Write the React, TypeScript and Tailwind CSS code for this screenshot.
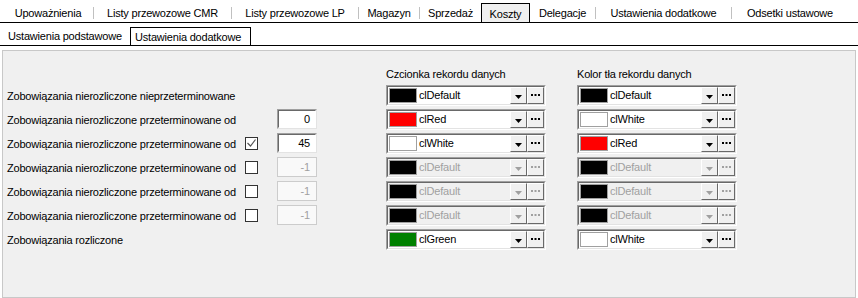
import React from "react";

type Tab = { label: string; w: number; active?: boolean; sep?: boolean };

const topTabs: Tab[] = [
  { label: "Upoważnienia", w: 91, sep: true },
  { label: "Listy przewozowe CMR", w: 138, sep: true },
  { label: "Listy przewozowe LP", w: 127, sep: true },
  { label: "Magazyn", w: 61, sep: true },
  { label: "Sprzedaż", w: 61 },
  { label: "Koszty", w: 49, active: true },
  { label: "Delegacje", w: 66, sep: true },
  { label: "Ustawienia dodatkowe", w: 136, sep: true },
  { label: "Odsetki ustawowe", w: 116 },
];

type Combo = { color: string; name: string; disabled?: boolean };
type Row = {
  label: string;
  check?: boolean;
  value?: string;
  valueDisabled?: boolean;
  a: Combo;
  b: Combo;
};

const dis: Combo = { color: "#000000", name: "clDefault", disabled: true };

const rows: Row[] = [
  {
    label: "Zobowiązania nierozliczone nieprzeterminowane",
    a: { color: "#000000", name: "clDefault" },
    b: { color: "#000000", name: "clDefault" },
  },
  {
    label: "Zobowiązania nierozliczone przeterminowane od",
    value: "0",
    a: { color: "#ff0000", name: "clRed" },
    b: { color: "#ffffff", name: "clWhite" },
  },
  {
    label: "Zobowiązania nierozliczone przeterminowane od",
    check: true,
    value: "45",
    a: { color: "#ffffff", name: "clWhite" },
    b: { color: "#ff0000", name: "clRed" },
  },
  {
    label: "Zobowiązania nierozliczone przeterminowane od",
    check: false,
    value: "-1",
    valueDisabled: true,
    a: dis,
    b: dis,
  },
  {
    label: "Zobowiązania nierozliczone przeterminowane od",
    check: false,
    value: "-1",
    valueDisabled: true,
    a: dis,
    b: dis,
  },
  {
    label: "Zobowiązania nierozliczone przeterminowane od",
    check: false,
    value: "-1",
    valueDisabled: true,
    a: dis,
    b: dis,
  },
  {
    label: "Zobowiązania rozliczone",
    a: { color: "#008000", name: "clGreen" },
    b: { color: "#ffffff", name: "clWhite" },
  },
];

function RaisedBtn({ children }: { children: React.ReactNode }) {
  return (
    <div className="w-[17px] h-full bg-[#f0f0f0] border-t border-l border-t-white border-l-white border-b border-r border-b-[#696969] border-r-[#696969] flex items-center justify-center">
      {children}
    </div>
  );
}

function ColorCombo({ c }: { c: Combo }) {
  const fg = c.disabled ? "#a0a0a0" : "#000000";
  return (
    <div className="w-[160px] h-[21px] border border-t-[#a0a0a0] border-l-[#a0a0a0] border-b-white border-r-white">
      <div
        className={
          "w-full h-full border border-t-[#696969] border-l-[#696969] border-b-[#e3e3e3] border-r-[#e3e3e3] flex items-stretch " +
          (c.disabled ? "bg-[#f0f0f0]" : "bg-white")
        }
      >
        <div className="flex-1 flex items-center pl-[1px]">
          <div
            className="w-[28px] h-[15px] border border-[#a0a0a0]"
            style={{ backgroundColor: c.color }}
          />
          <span
            className={"ml-[2px] pt-[1px] leading-none " + (c.disabled ? "text-[#a0a0a0]" : "text-black")}
          >
            {c.name}
          </span>
        </div>
        <RaisedBtn>
          <svg width="7" height="4" viewBox="0 0 7 4" className="mt-[3px]">
            <polygon points="0,0 7,0 3.5,4" fill={fg} />
          </svg>
        </RaisedBtn>
        <RaisedBtn>
          <svg width="9" height="2" viewBox="0 0 9 2">
            <rect x="0" y="0" width="2" height="2" fill={fg} />
            <rect x="3.5" y="0" width="2" height="2" fill={fg} />
            <rect x="7" y="0" width="2" height="2" fill={fg} />
          </svg>
        </RaisedBtn>
      </div>
    </div>
  );
}

function CheckBox({ checked }: { checked: boolean }) {
  return (
    <div className="w-[13px] h-[13px] border border-[#333333] bg-white flex items-center justify-center">
      {checked && (
        <svg width="9" height="8" viewBox="0 0 9 8">
          <polyline points="0.5,4 3.5,7 8.5,0.5" fill="none" stroke="#555555" strokeWidth="1.2" />
        </svg>
      )}
    </div>
  );
}

function NumEdit({ value, disabled }: { value: string; disabled?: boolean }) {
  return disabled ? (
    <div className="w-[40px] h-[20px] border border-[#cccccc] bg-[#f9f9f9] flex items-center justify-end pr-[6px] pt-[1px] text-[#a0a0a0]">
      {value}
    </div>
  ) : (
    <div className="w-[40px] h-[20px] border border-t-[#a0a0a0] border-l-[#a0a0a0] border-b-[#e3e3e3] border-r-[#e3e3e3] bg-white">
      <div className="w-full h-full border border-t-[#696969] border-l-[#696969] border-b-white border-r-white flex items-center justify-end pr-[5px] pt-[1px] text-black">
        {value}
      </div>
    </div>
  );
}

export default function App() {
  return (
    <div
      className="w-[858px] h-[298px] bg-white overflow-hidden text-[11px] tracking-[-0.2px] text-black flex flex-col whitespace-nowrap"
      style={{ fontFamily: '"Liberation Sans", Arial, sans-serif' }}
    >
      {/* top tabs */}
      <div className="h-[23px] border-b border-black flex items-end pl-[3px] shrink-0">
        {topTabs.map((t) =>
          t.active ? (
            <div
              key={t.label}
              className="h-[19px] border-t border-l border-r border-black bg-[#f0f0f0] flex items-center justify-center pt-[2px] shrink-0"
              style={{ width: t.w }}
            >
              {t.label}
            </div>
          ) : (
            <div
              key={t.label}
              className="h-[19px] flex items-center shrink-0"
              style={{ width: t.w }}
            >
              <div className="flex-1 text-center pt-[2px]">{t.label}</div>
              {t.sep && <div className="w-px h-[12px] bg-[#c0c0c0]" />}
            </div>
          )
        )}
      </div>
      {/* sub tabs */}
      <div className="h-[19px] mt-[4px] border-b border-black flex items-end shrink-0">
        <div className="h-[18px] w-[130px] flex items-center pl-[8px] pt-[1px]">Ustawienia podstawowe</div>
        <div className="h-[18px] w-[121px] border-t border-l border-r border-black bg-white flex items-center pl-[4px] pt-[1px]">
          Ustawienia dodatkowe
        </div>
      </div>
      {/* panel */}
      <div className="mt-[4px] mx-[2px] flex-1 border border-[#c8c8c8] bg-[#f0f0f0] pt-[15px]">
        <div className="flex h-[16px] items-center">
          <div className="w-[383px]" />
          <div className="w-[191px]">Czcionka rekordu danych</div>
          <div>Kolor tła rekordu danych</div>
        </div>
        <div className="mt-[1px] flex flex-col">
          {rows.map((r, i) => (
            <div key={i} className="h-[24px] flex items-center">
              <div className="w-[242px] pl-[4px] pt-[2px]">{r.label}</div>
              <div className="w-[32px] flex items-center">
                {r.check !== undefined && <CheckBox checked={r.check} />}
              </div>
              <div className="w-[40px]">
                {r.value !== undefined && <NumEdit value={r.value} disabled={r.valueDisabled} />}
              </div>
              <div className="w-[69px]" />
              <ColorCombo c={r.a} />
              <div className="w-[31px]" />
              <ColorCombo c={r.b} />
            </div>
          ))}
        </div>
      </div>
    </div>
  );
}
